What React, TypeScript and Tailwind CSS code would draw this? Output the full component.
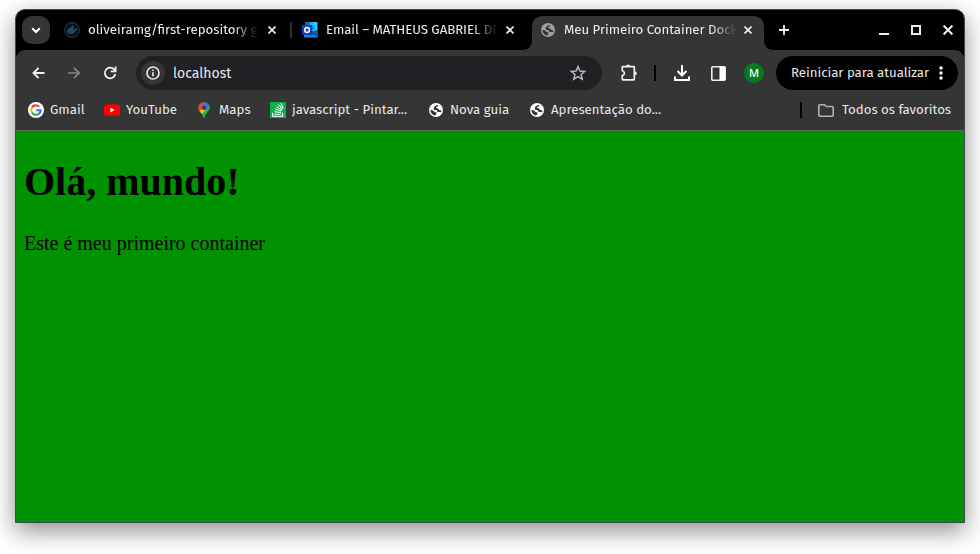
import React from "react";
import type { ReactNode } from "react";

const sans = "font-['Fira_Sans','Noto_Sans',sans-serif]";

function Globe({ color, cut }: { color: string; cut: string }) {
  return (
    <svg width="14" height="14" viewBox="0 0 14 14" className="shrink-0">
      <circle cx="7" cy="7" r="7" fill={color} />
      <path d="M8.300 1.500 8.900 3.100 6.900 4 6.700 5.300 8.600 5.500 10.200 6.600 12.600 6.500C12.600 4 10.800 1.800 8.300 1.500Z" fill={color} />
      <path d="M9.400 2.100 8.700 3.600 7.100 4.100 7.200 5 9.200 5.400 10.100 7 12.500 7.500 12.100 9.300 10.600 9.100 8.600 8.900 7.900 7.300 5.300 6.900 4.600 5.200 5.700 3.300 8.400 2Z" fill={cut} />
      <path d="M1.400 6.800 4.100 7.400 5.500 9 7.500 9.600 7.200 11.200 5.900 12.400C3.200 11.900 1.300 9.700 1.400 6.800Z" fill={cut} />
    </svg>
  );
}

function Cross({ size = 8, w = 1.6 }: { size?: number; w?: number }) {
  return (
    <svg width={size} height={size} viewBox="0 0 8 8" className="shrink-0" stroke="#f1f1f1" strokeWidth={w}>
      <path d="M.5 .5 7.5 7.5M7.5 .5 .5 7.5" />
    </svg>
  );
}

function Docker() {
  return (
    <svg width="16" height="16" viewBox="0 0 16 16" className="shrink-0">
      <circle cx="8" cy="8" r="7.4" fill="#07131c" stroke="#1b364b" strokeWidth="1.1" />
      <path d="M2.8 8h7.7c.7-.5.6-1.3.2-2l.7-.6c.6.4.9.9.9 1.5.7-.1 1.2 0 1.6.3-.4.8-1.1 1.1-2 1.1-.8 2.4-2.6 3.7-5.2 3.7C4.200 12 2.800 10.600 2.800 8Z" fill="#234866" />
      <path d="M4 6.300h5.700v1.900H4zM6 4.800h3.600v1.600H6zM8 3.400h1.500v1.500H8z" fill="#234866" />
    </svg>
  );
}

function Outlook() {
  return (
    <svg width="16" height="16" viewBox="0 0 16 16" className="shrink-0">
      <path d="M3 0h13v11H3z" fill="#0a67b8" />
      <path d="M3 0h4.500v4H3z" fill="#1067c4" />
      <path d="M7.500 0H15v4H7.500z" fill="#28a8ea" />
      <path d="M11 0h4v4h-4zM10 4h5v5h-5z" fill="#32c8fa" />
      <path d="M10 4h3v4h-3z" fill="#0fa4ee" />
      <path d="M2 8.500 9 12l7-5v8.500H2z" fill="#1687dd" />
      <path d="m9 12 7-5v8z" fill="#0c57a8" />
      <rect y="3" width="10.300" height="10" rx=".7" fill="#153cba" />
      <ellipse cx="5.100" cy="8" rx="2.300" ry="2.500" fill="none" stroke="white" strokeWidth="1.500" />
    </svg>
  );
}

function Google() {
  return (
    <svg width="16" height="16" viewBox="0 0 16 16" className="shrink-0" fill="none" strokeWidth="2.100">
      <circle cx="8" cy="8" r="8" fill="white" />
      <path d="M3.900 5.600C5.400 3 8.700 2.500 11.300 4.700" stroke="#f33b32" />
      <path d="M3.900 5.500C3 7 3 9 3.900 10.500" stroke="#fbbc05" />
      <path d="M3.900 10.400C5.400 13 8.800 13.600 11.100 11.500" stroke="#34a853" />
      <path d="M8.200 8.200h4.400C12.600 9.700 12.100 10.800 11.100 11.600" stroke="#4d64ed" />
    </svg>
  );
}

function YouTube() {
  return (
    <svg width="16" height="12" viewBox="0 0 16 12" className="shrink-0">
      <rect y=".4" width="16" height="11.400" rx="2.800" fill="#f00" />
      <path d="m6.400 3.700 4.200 2.400-4.200 2.400z" fill="white" />
    </svg>
  );
}

function MapsPin() {
  return (
    <svg width="12" height="16" viewBox="0 0 12 16" className="shrink-0">
      <defs>
        <clipPath id="pin">
          <path d="M6 .2a5.700 5.700 0 0 1 5.700 5.700c0 3.600-4.500 4.800-5 9.500Q6 16.400 5.300 15.400C4.800 11 .3 9.500.3 5.900A5.700 5.700 0 0 1 6 .2Z" />
        </clipPath>
      </defs>
      <g clipPath="url(#pin)">
        <path d="M0 0h12v16H0z" fill="#22b24c" />
        <path d="M0 0h6v6L1.500 11H0z" fill="#f33b32" />
        <path d="M4.500-1H12v4L6 9z" fill="#4d64ed" />
        <path d="m1 10 4-4.500 2.700 2.200L3.300 13z" fill="#fbbc05" />
      </g>
      <circle cx="6" cy="5.900" r="2.100" fill="#263b86" />
    </svg>
  );
}

function StackIcon() {
  return (
    <svg width="16" height="16" viewBox="0 0 16 16" className="shrink-0">
      <path d="M0 0h16v16H0z" fill="#0bb04b" />
      <path d="M2.600 10.700v3.500h10v-3.500M4.300 12.200h6.600M4.500 9.700l6.600.8M5.100 7.100l6.300 2M6.400 4.600l5.500 3.500M8.400 2.500l4.200 4.700M10.800 1.200l2.500 5" fill="none" stroke="white" strokeWidth="1.100" />
    </svg>
  );
}

function Tab({ icon, title, className, text, active }: { icon: ReactNode; title: string; className: string; text: string; active?: boolean }) {
  return (
    <div className={`relative flex shrink-0 items-center ${className}`}>
      {active && (
        <svg className="absolute bottom-0 -left-[10px]" width="252" height="10" fill="#353535">
          <path d="M0 10Q10 10 10 0V10ZM242 0Q242 10 252 10H242Z" />
        </svg>
      )}
      {icon}
      <div className={`shrink-0 overflow-hidden whitespace-nowrap text-[#ededed] [mask-image:linear-gradient(to_right,black_86%,transparent_101%)] ${text}`}>{title}</div>
      <div className="ml-auto flex"><Cross /></div>
    </div>
  );
}

function Bookmark({ icon, label, width, gap }: { icon: ReactNode; label: string; width: string; gap: string }) {
  return (
    <div className={`flex shrink-0 items-center whitespace-nowrap ${width} ${gap}`}>
      {icon}
      <span>{label}</span>
    </div>
  );
}

export default function App() {
  return (
    <div className={`h-[554px] w-[980px] overflow-hidden bg-white px-[15px] pt-[9px] text-[13.25px] leading-[18px] text-[#e8e8e8] ${sans}`}>
      <div className="flex h-[514px] flex-col overflow-hidden rounded-t-[10px] border border-[#414950] bg-black shadow-[0_8px_24px_rgba(0,0,0,0.45)]">
        <header className="flex h-10 shrink-0 items-center pl-1.5">
          <div className="flex size-7 shrink-0 items-center justify-center rounded-[10px] bg-[#353535]">
            <svg width="10" height="7" viewBox="0 0 10 7" fill="none" stroke="white" strokeWidth="2"><path d="m1.200 1.200 3.800 3.800 3.800-3.800" /></svg>
          </div>
          <Tab icon={<Docker />} title="oliveiramg/first-repository g" className="ml-[14px] h-full w-[212px]" text="ml-2 w-[169px]" />
          <div className="ml-[14px] h-4 w-[2px] shrink-0 bg-[#303030]" />
          <Tab icon={<Outlook />} title="Email – MATHEUS GABRIEL DE" className="ml-[10px] h-full w-[212px]" text="ml-2 w-[170px] tracking-[-0.08px]" />
          <Tab active icon={<Globe color="#9aa0a6" cut="#353535" />} title="Meu Primeiro Container Dock" className="ml-[18px] h-[34px] w-[232px] self-end rounded-t-[10px] bg-[#353535] pr-3 pb-[6px] pl-[9px]" text="ml-[9px] w-[171px] tracking-[-0.05px]" />
          <svg className="ml-[15px] shrink-0" width="10" height="10" stroke="#f1f1f1" strokeWidth="1.800"><path d="M5 0v10M0 5h10" /></svg>
          <div className="mr-[11px] ml-auto flex items-center">
            <div className="mt-2 h-[2px] w-[10px] bg-[#eee]" />
            <div className="ml-[22px] size-[10px] border-2 border-[#eee]" />
            <div className="ml-[22px]"><Cross size={10} w={1.6} /></div>
          </div>
        </header>

        <div className="shrink-0 rounded-t-[9px] bg-[#353535]">
          <div className="flex h-[46px] items-center">
            <svg className="ml-4 shrink-0" width="13" height="12" fill="none" stroke="#f1f1f1" strokeWidth="1.800"><path d="M12.500 6H1.400M6.600.8 1.400 6l5.200 5.200" /></svg>
            <svg className="ml-[23px] shrink-0" width="13" height="12" fill="none" stroke="#858585" strokeWidth="1.700"><path d="M0 6h11.200M6 .8 11.200 6 6 11.200" /></svg>
            <svg className="ml-[22px] shrink-0" width="14" height="14" fill="none" stroke="#f1f1f1" strokeWidth="1.800"><path d="M11.500 4A5.300 5.300 0 1 0 12.300 8M12.600.6v4.700H7.800" /></svg>
            <div className="ml-[19px] flex h-[34px] w-[466px] shrink-0 items-center rounded-full bg-[#202025] pl-[5px]">
              <div className="flex size-6 items-center justify-center rounded-full bg-[#353535]">
                <svg width="14" height="14" fill="none" stroke="#e6e6e6" strokeWidth="1.700"><circle cx="7" cy="7" r="6" /><path d="M7 6.200v4M7 3.500v1.600" /></svg>
              </div>
              <span className="ml-2 pt-[2px] text-[14px]">localhost</span>
              <svg className="mr-4 ml-auto" width="16" height="16" viewBox="0 0 16 16" fill="none" stroke="#b8b8b8" strokeWidth="1.500"><path d="m8 1.600 1.900 4.400 4.800.4-3.600 3.100 1.100 4.700L8 11.700l-4.200 2.500 1.100-4.700-3.600-3.100L6.100 6z" /></svg>
            </div>
            <svg className="ml-[18px] shrink-0" width="18" height="18" viewBox="0 0 18 18"><path d="M2.300 3.300V6.800c2.800.8 2.800 3.900 0 4.800v3.600q0 .6.600.6h10.800q.6 0 .6-.6V3.300q0-.6-.6-.6H2.900q-.6 0-.6.600Z" fill="none" stroke="#f1f1f1" strokeWidth="1.700" strokeLinejoin="round" /><path d="M6.100 2.500a2 2 0 0 1 4 0ZM14.600 7.200a2 2 0 0 1 2.200 2 2 2 0 0 1-2.200 2Z" fill="#f1f1f1" /></svg>
            <div className="ml-4 h-4 w-[2px] shrink-0 bg-black" />
            <svg className="ml-[18px] shrink-0" width="16" height="16" fill="none" stroke="white" strokeWidth="2"><path d="M8 0v10M3.500 6 8 10.500 12.500 6M1 11.500V15h14v-3.500" /></svg>
            <svg className="ml-[21px] shrink-0" width="15" height="15"><rect x=".8" y=".8" width="13.400" height="13.400" rx="1" fill="none" stroke="#eee" strokeWidth="1.600" /><path d="M8.500 1H14v13H8.500z" fill="white" /></svg>
            <div className="ml-[18px] flex size-5 shrink-0 items-center justify-center rounded-full bg-[#087a20] font-['Noto_Sans',sans-serif] text-[11px] font-medium text-white">M</div>
            <div className="ml-3 flex h-[34px] w-[182px] shrink-0 items-center rounded-full bg-black pl-[15px] whitespace-nowrap">
              <span className="w-[138px] tracking-[-0.03px]">Reiniciar para atualizar</span>
              <svg className="ml-[10px] shrink-0" width="4" height="14" fill="white"><circle cx="2" cy="2" r="1.700" /><circle cx="2" cy="7" r="1.700" /><circle cx="2" cy="12" r="1.700" /></svg>
            </div>
          </div>
          <div className="flex h-[34px] items-center pb-[6px] pl-3">
            <Bookmark icon={<Google />} label="Gmail" width="w-[76px]" gap="gap-[6px]" />
            <Bookmark icon={<YouTube />} label="YouTube" width="w-[94px]" gap="gap-[6px]" />
            <Bookmark icon={<MapsPin />} label="Maps" width="w-[72px]" gap="gap-[9px]" />
            <Bookmark icon={<StackIcon />} label="javascript - Pintar..." width="w-[159px]" gap="gap-[6px]" />
            <Bookmark icon={<Globe color="white" cut="#353535" />} label="Nova guia" width="w-[101px]" gap="gap-[7px]" />
            <Bookmark icon={<Globe color="white" cut="#353535" />} label="Apresentação do..." width="w-[132px]" gap="gap-[7px]" />
            <div className="mr-[14px] ml-auto flex items-center">
              <div className="h-4 w-[2px] bg-black" />
              <svg className="ml-4" width="16" height="13" fill="none" stroke="#b3b3b3" strokeWidth="1.600"><path d="M2 .8h4.500l1.700 1.700H14q1.200 0 1.200 1.200V11q0 1.200-1.200 1.200H2Q.8 12.200.8 11V2Q.8.8 2 .8Z" /></svg>
              <span className="ml-2 w-[108px] whitespace-nowrap tracking-[-0.02px]">Todos os favoritos</span>
            </div>
          </div>
        </div>

        <main className="flex-1 border-t border-[#60655f] bg-[#009200] px-2 pt-[28px] font-['Liberation_Serif',serif] text-black">
          <h1 className="text-[40px] leading-[46px] font-bold">Olá, mundo!</h1>
          <p className="mt-[27px] text-[20px] leading-[23px]">Este é meu primeiro container</p>
        </main>
      </div>
    </div>
  );
}
